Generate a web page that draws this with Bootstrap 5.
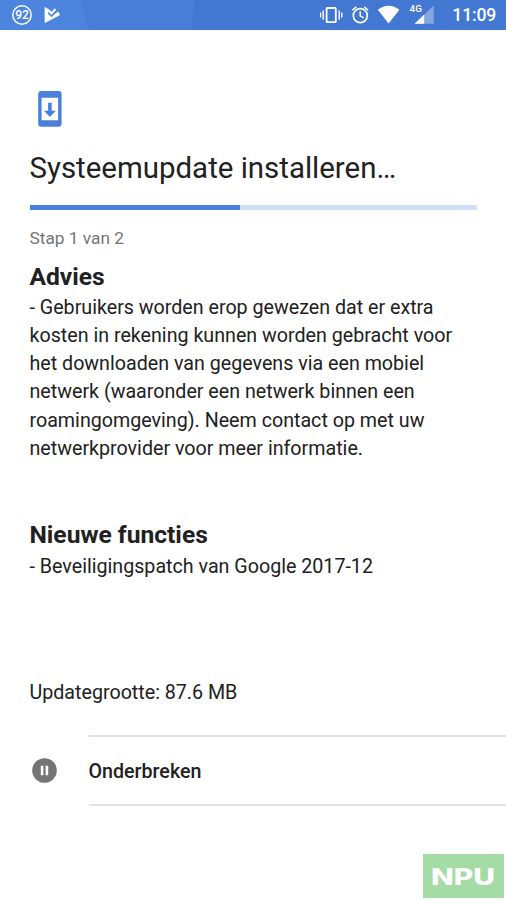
<!DOCTYPE html>
<html lang="nl">
<head>
<meta charset="utf-8">
<meta name="viewport" content="width=device-width, initial-scale=1">
<title>Systeemupdate</title>
<link href="https://cdn.jsdelivr.net/npm/bootstrap@5.3.0/dist/css/bootstrap.min.css" rel="stylesheet">
<style>
body { font-family: Roboto, sans-serif; color: #212121; font-size: 19.66px; line-height: 28.15px; width: 506px; height: 900px; }
svg { display: block; flex: none; }
.status-bar { height: 29.5px; padding: 0 10px 0 12px; color: #fff;
  background: linear-gradient(97deg, transparent 38%, #4277d2 38.3%), linear-gradient(75deg, #4d84de 17%, #487dd8 17.5%); }
.clock { font-size: 17.6px; font-weight: 500; line-height: 30px; padding-top: 1px; letter-spacing: -.2px; }
.page { padding: 61px 29.5px 0; }
.headline { font-size: 29.45px; line-height: 36px; margin: 23.5px 0 0; font-weight: 400; }
.progress { --bs-progress-height: 5px; --bs-progress-bg: #cfdff5; --bs-progress-bar-bg: #4a80dc; --bs-progress-border-radius: 0; margin: 18.5px 0 0; }
.step { font-size: 17.3px; line-height: 24px; color: #757575; margin-top: 16px; }
.section-title { font-size: 24.6px; line-height: 32px; font-weight: 700; margin: 11px 0 1.5px; }
.features { margin-top: 56px; }
.features .section-title { margin: 10px 0 2.3px; }
.size-row { margin-top: 98px; }
.action-row { margin-top: 27px; padding-left: 31.5px; }
.action { margin-left: 32px; height: 71.5px; padding-top: 4px; border-top: 2px solid #e2e2e2; border-bottom: 2px solid #e2e2e2; font-weight: 500; }
.watermark { right: 2px; bottom: 2px; width: 81px; height: 44px; background: #a5dba4; }
</style>
<script src="https://cdn.jsdelivr.net/npm/bootstrap@5.3.0/dist/js/bootstrap.bundle.min.js"></script>
</head>
<body class="position-relative overflow-hidden bg-white">
<header class="status-bar d-flex align-items-center">
  <svg width="308" height="30" viewBox="12 0 308 30" fill="none">
    <circle cx="22" cy="15" r="9.2" stroke="#fff" stroke-width="1.5"/>
    <text x="22" y="19.3" text-anchor="middle" font-size="12" font-weight="500" fill="#fff">92</text>
    <path d="M45 7.4 50 10.5 51.7 12.3 54.8 8.7 56.5 10.2 51.5 15.6 48.3 12.6 47.6 13.4 51.5 17.3 58 11.8 59.6 14.9 45 22.6Z" fill="#fff" stroke="#fff" stroke-width=".7" stroke-linejoin="round"/>
    <path d="m48.2 12.5 3.2 3.3 6-6.3" stroke="#487edb" stroke-width="1.2"/>
  </svg>
  <svg width="120" height="30" viewBox="320 0 120 30" fill="none">
    <rect x="326.6" y="8" width="9.2" height="14.2" rx=".8" stroke="#fff" stroke-width="1.8"/>
    <path d="M323.2 10.5v9.2M320.5 12.6v5M339.2 10.5v9.2M341.8 12.6v5" stroke="#fff" stroke-width="1.4"/>
    <circle cx="360.3" cy="15.6" r="7" stroke="#fff" stroke-width="1.7"/>
    <path d="M360.2 11.3v4.5l3.4 2.1M352.3 10.3l4-3.4M368.2 10.3l-4-3.4" stroke="#fff" stroke-width="1.5"/>
    <path d="M377.8 9.7q10.8-7.9 21.6 0L388.6 23.4Z" fill="#fff"/>
    <path d="M433.8 5.4V23.8H414.6Z" fill="#fff" opacity=".35"/>
    <path d="M424.2 14.6V23.8H414.6Z" fill="#fff"/>
    <rect x="409" y="2" width="14" height="10.8" fill="#4277d2"/>
    <text x="409.6" y="11.8" font-size="9.8" font-weight="500" fill="#fff">4G</text>
  </svg>
  <span class="clock ms-auto">11:09</span>
</header>
<main class="page">
  <svg width="36" height="36" viewBox="0 0 36 36">
    <path fill="#4a80dc" fill-rule="evenodd" d="M11 0h17.6q3 0 3 3v29.7q0 3-3 3H11.200q-3 0-3-3V3q0-3 3-3ZM11.600 6.700v22.500h16.500V6.700ZM18.100 11.700h3.600v8h4.200l-6 6.200-6-6.200h4.200Z"/>
  </svg>
  <h1 class="headline text-nowrap">Systeemupdate installeren…</h1>
  <div class="progress" role="progressbar" aria-valuenow="47" aria-valuemin="0" aria-valuemax="100"><div class="progress-bar" style="width:47%"></div></div>
  <p class="step mb-0">Stap 1 van 2</p>
  <section>
    <h2 class="section-title">Advies</h2>
    <p class="mb-0 text-nowrap">- Gebruikers worden erop gewezen dat er extra<br>kosten in rekening kunnen worden gebracht voor<br>het downloaden van gegevens via een mobiel<br>netwerk (waaronder een netwerk binnen een<br>roamingomgeving). Neem contact op met uw<br>netwerkprovider voor meer informatie.</p>
  </section>
  <section class="features">
    <h2 class="section-title">Nieuwe functies</h2>
    <p class="mb-0">- Beveiligingspatch van Google 2017-12</p>
  </section>
  <p class="size-row mb-0">Updategrootte: 87.6 MB</p>
</main>
<div class="action-row d-flex align-items-center">
  <svg width="25" height="25" viewBox="0 0 25 25">
    <circle cx="12.5" cy="12.5" r="12.3" fill="#757575"/>
    <path d="M8.800 7.800h2.600v9.400H8.800ZM13.600 7.800h2.600v9.400h-2.600Z" fill="#fff"/>
  </svg>
  <div class="action d-flex align-items-center flex-grow-1">Onderbreken</div>
</div>
<div class="watermark position-absolute">
  <svg width="81" height="44" viewBox="0 0 81 44"><text x="8" y="31" font-family="Inter, sans-serif" font-size="22.5" font-weight="800" fill="#fff" textLength="64" lengthAdjust="spacingAndGlyphs">NPU</text></svg>
</div>
</body>
</html>
